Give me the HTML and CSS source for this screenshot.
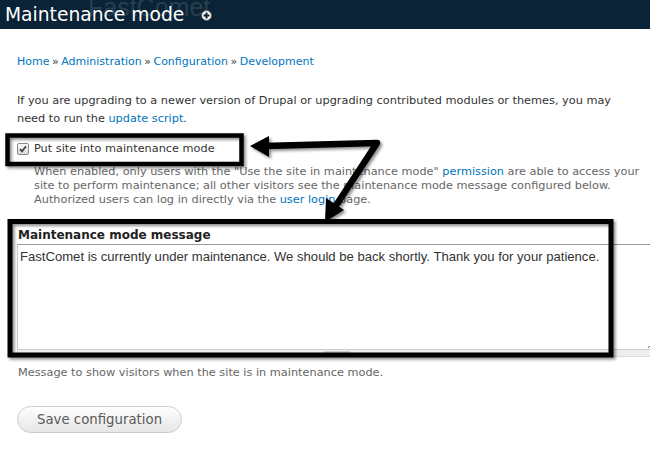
FILE: index.html
```html
<!DOCTYPE html>
<html lang="en">
<head>
  <meta charset="UTF-8">
  <title>Maintenance mode</title>
  <link rel="stylesheet" href="styles.css">
</head>
<body>
  <!-- Header -->
  <div class="page-header">
    <span class="brand-mark">FastComet</span>
    <h1>Maintenance mode</h1>
    <span class="shortcut-add">
      <svg width="11" height="11" viewBox="0 0 11 11">
        <circle cx="5.5" cy="5.5" r="5" fill="#fff" stroke="#555" stroke-width="1"/>
        <path d="M5.5 2.5v6M2.5 5.5h6" stroke="#0a2336" stroke-width="2"/>
      </svg>
    </span>
  </div>

  <div class="content">
    <div class="breadcrumb">
      <a href="#">Home</a> » <a href="#">Administration</a> » <a href="#">Configuration</a> » <a href="#">Development</a>
    </div>

    <p class="intro">If you are upgrading to a newer version of Drupal or upgrading contributed modules or themes, you may need to run the <a href="#">update script</a>.</p>

    <form>
      <div class="form-item checkbox-item">
        <span class="fake-check">
          <svg width="8" height="8" viewBox="0 0 8 8"><path d="M1 4.2l2 2.2L7 1.2" fill="none" stroke="#444" stroke-width="1.8"/></svg>
        </span>
        <label>Put site into maintenance mode</label>
      </div>
      <div class="description indent">When enabled, only users with the "Use the site in maintenance mode" <a href="#">permission</a> are able to access your site to perform maintenance; all other visitors see the maintenance mode message configured below. Authorized users can log in directly via the <a href="#">user login</a> page.</div>

      <div class="form-item textarea-item">
        <label class="field-label">Maintenance mode message</label>
        <textarea rows="6">FastComet is currently under maintenance. We should be back shortly. Thank you for your patience.</textarea>
        <div class="grippie"><span class="grip-handle"></span></div>
        <div class="description">Message to show visitors when the site is in maintenance mode.</div>
      </div>

      <button type="button" class="save-button">Save configuration</button>
    </form>
  </div>

  <!-- Annotation overlay -->
  <svg class="annotations" width="650" height="459" viewBox="0 0 650 459">
    <rect x="7.5" y="135.5" width="234" height="28.5" fill="none" stroke="#000" stroke-width="4.5"/>
    <rect x="10" y="221.5" width="601" height="133.5" fill="none" stroke="#000" stroke-width="5"/>
    <path d="M264 146 L377 143 L335 207" fill="none" stroke="#000" stroke-width="6.5" stroke-linejoin="round"/>
    <polygon points="250,146 269,136 269,157" fill="#000"/>
    <polygon points="325,222 344,210 326,198" fill="#000"/>
  </svg>
</body>
</html>
```

FILE: styles.css
```css
body {
  margin: 0;
  padding: 0;
  font-family: "DejaVu Sans", Verdana, sans-serif;
  font-size: 11.3px;
  color: #333;
  background: #fff;
  position: relative;
  width: 650px;
  height: 459px;
  overflow: hidden;
}

a {
  color: #0074bd;
  text-decoration: none;
}

.page-header {
  position: relative;
  height: 29px;
  background: #0a2336;
  display: flex;
  align-items: center;
  padding-left: 5px;
  overflow: hidden;
}

.page-header h1 {
  position: relative;
  margin: 0;
  font-size: 18.7px;
  font-weight: normal;
  color: #fff;
  line-height: 29px;
}

.brand-mark {
  position: absolute;
  left: 88px;
  top: -7px;
  font-family: "Liberation Sans", sans-serif;
  font-size: 25px;
  color: rgba(255, 255, 255, 0.14);
}

.shortcut-add {
  position: relative;
  display: flex;
  margin-left: 17px;
  margin-top: 1px;
}

.content {
  padding: 0 0 0 17px;
}

.breadcrumb {
  margin-top: 26px;
  line-height: 14px;
  font-size: 11px;
  word-spacing: -1px;
}

.intro {
  margin: 23px 0 0;
  line-height: 18px;
  padding-right: 30px;
}

.checkbox-item {
  display: flex;
  align-items: center;
  margin-top: 13px;
  height: 16px;
  line-height: 16px;
}

.fake-check {
  width: 10px;
  height: 10px;
  border: 1px solid #8a8a8a;
  border-radius: 2px;
  background: linear-gradient(#fdfdfd, #d9d9d9);
  display: flex;
  align-items: center;
  justify-content: center;
  margin-right: 5px;
}

.checkbox-item label {
  color: #333;
}

.description {
  color: #666;
  line-height: 14px;
}

.description.indent {
  margin-top: 8px;
  padding-left: 17px;
  padding-right: 2px;
}

.textarea-item {
  margin-top: 20px;
}

.field-label {
  display: block;
  font-weight: bold;
  font-size: 12px;
  line-height: 16px;
  color: #222;
  padding-left: 1px;
  margin-bottom: 1px;
}

textarea {
  display: block;
  box-sizing: border-box;
  width: 640px;
  height: 106px;
  margin: 0;
  padding: 4px 2px;
  border: 1px solid #ccc;
  border-top-color: #999;
  font-family: "Liberation Sans", Arial, sans-serif;
  font-size: 13.1px;
  line-height: 16px;
  color: #333;
  resize: vertical;
}

.grippie {
  width: 640px;
  height: 7px;
  background: #eee;
  border: 1px solid #ddd;
  border-top: none;
  box-sizing: border-box;
  display: flex;
  justify-content: center;
}

.grip-handle {
  width: 26px;
  height: 2px;
  margin-top: 1px;
  background: #ccc;
}

.textarea-item .description {
  margin-top: 9px;
  padding-left: 1px;
}

.save-button {
  margin-top: 26px;
  height: 27px;
  padding: 0 19px;
  font-family: "DejaVu Sans", Verdana, sans-serif;
  font-size: 13.3px;
  color: #5a5a5a;
  background: linear-gradient(#fefefe, #e6e6e6);
  border: 1px solid #ccc;
  border-radius: 14px;
}

.annotations {
  position: absolute;
  top: 0;
  left: 0;
  pointer-events: none;
  filter: drop-shadow(2px 2px 1.5px rgba(0, 0, 0, 0.45));
}
```
